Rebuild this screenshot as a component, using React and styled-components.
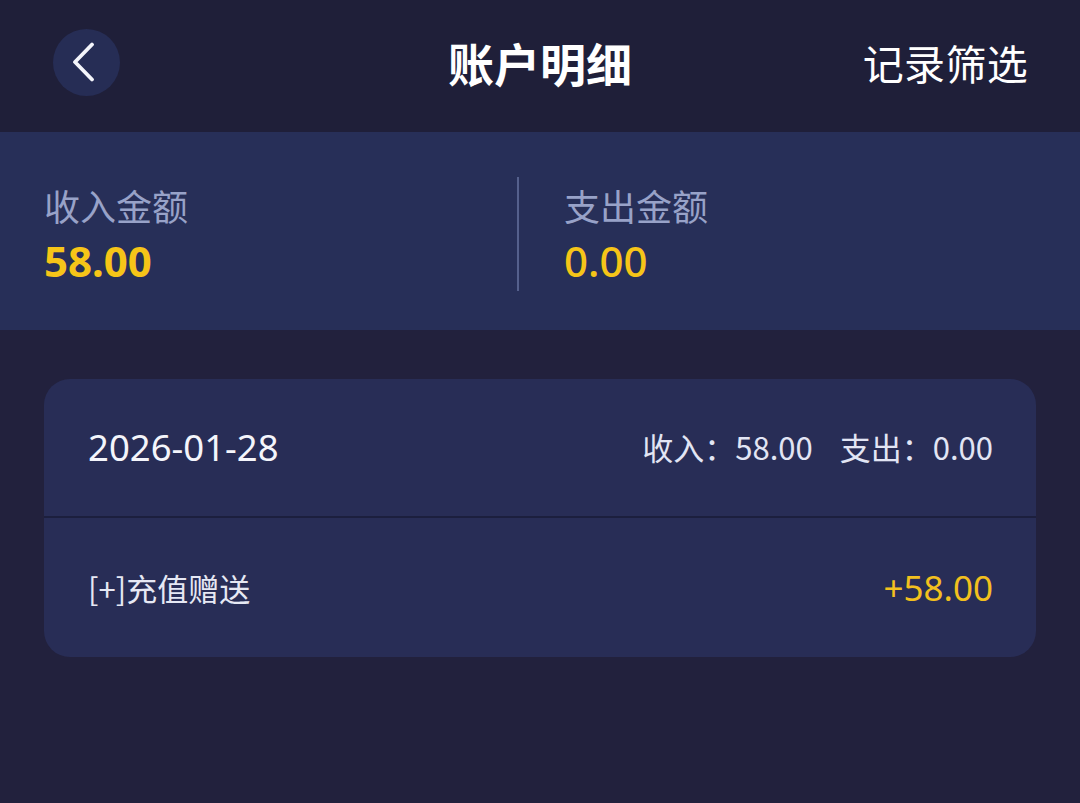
import React from 'react';
import styled, { createGlobalStyle } from 'styled-components';

const GlobalStyle = createGlobalStyle`
  html, body {
    margin: 0;
    padding: 0;
    background: #22213d;
  }
  body {
    font-family: "Noto Sans CJK SC", "Noto Sans", sans-serif;
    -webkit-font-smoothing: antialiased;
  }
`;

const summary = [
  { label: '收入金额', value: '58.00', bold: true },
  { label: '支出金额', value: '0.00' },
];

const records = [
  {
    date: '2026-01-28',
    income: '58.00',
    expense: '0.00',
    items: [{ title: '[+]充值赠送', amount: '+58.00' }],
  },
];

export default function App() {
  return (
    <Page>
      <GlobalStyle />
      <Header>
        <BackButton aria-label="返回">
          <svg width="24" height="40" viewBox="0 0 24 40">
            <path
              d="M20 2.5 L3 20 L20 37.5"
              fill="none"
              stroke="#f4f5fb"
              strokeWidth="3.8"
              strokeLinecap="round"
              strokeLinejoin="round"
            />
          </svg>
        </BackButton>
        <Title>账户明细</Title>
        <FilterLink>记录筛选</FilterLink>
      </Header>

      <Summary>
        {summary.map((s, i) => (
          <SummaryCol key={s.label} divided={i > 0}>
            <SummaryLabel>{s.label}</SummaryLabel>
            <SummaryValue bold={s.bold}>{s.value}</SummaryValue>
          </SummaryCol>
        ))}
      </Summary>

      <List>
        {records.map((r) => (
          <Card key={r.date}>
            <CardHead>
              <DateText>{r.date}</DateText>
              <Totals>
                <span>收入：{r.income}</span>
                <span>支出：{r.expense}</span>
              </Totals>
            </CardHead>
            {r.items.map((it) => (
              <ItemRow key={it.title}>
                <ItemTitle>{it.title}</ItemTitle>
                <ItemAmount>{it.amount}</ItemAmount>
              </ItemRow>
            ))}
          </Card>
        ))}
      </List>
    </Page>
  );
}

const Page = styled.div`
  min-height: 803px;
  background: #22213d;
  color: #fff;
`;

const Header = styled.div`
  height: 132px;
  background: #1f1f39;
  display: flex;
  align-items: center;
  justify-content: space-between;
  padding: 0 52px 8px 53px;
  box-sizing: border-box;
  position: relative;
`;

const BackButton = styled.div`
  width: 67px;
  height: 67px;
  border-radius: 50%;
  background: #262d55;
  display: flex;
  align-items: center;
  justify-content: center;
  padding-right: 6px;
  box-sizing: border-box;
`;

const Title = styled.div`
  position: absolute;
  left: 0;
  right: 0;
  top: 35px;
  text-align: center;
  font-size: 46px;
  font-weight: 700;
  line-height: 54px;
  color: #fff;
  pointer-events: none;
`;

const FilterLink = styled.div`
  font-size: 41px;
  line-height: 52px;
  color: #fff;
  letter-spacing: 0.3px;
`;

const Summary = styled.div`
  height: 198px;
  background: #272f58;
  display: grid;
  grid-template-columns: 517px 1fr;
  align-items: center;
`;

const SummaryCol = styled.div`
  height: 114px;
  padding-left: ${({ divided }) => (divided ? '45px' : '44px')};
  border-left: ${({ divided }) => (divided ? '2px solid #55608c' : 'none')};
  display: flex;
  flex-direction: column;
  justify-content: center;
  box-sizing: border-box;
  margin-top: 6px;
`;

const SummaryLabel = styled.div`
  font-size: 36px;
  line-height: 44px;
  color: #98a2c8;
`;

const SummaryValue = styled.div`
  font-family: "Noto Sans", "Open Sans", sans-serif;
  font-size: 42px;
  line-height: 50px;
  margin-top: 9px;
  font-weight: ${({ bold }) => (bold ? 700 : 500)};
  color: #f6c518;
`;

const List = styled.div`
  padding: 49px 44px 0;
`;

const Card = styled.div`
  background: #282d56;
  border-radius: 26px;
  overflow: hidden;
`;

const CardHead = styled.div`
  height: 139px;
  display: flex;
  align-items: center;
  justify-content: space-between;
  padding: 0 43px 2px 44px;
  border-bottom: 2px solid #1c1f3e;
  box-sizing: border-box;
`;

const DateText = styled.div`
  font-family: "Noto Sans", "Open Sans", sans-serif;
  font-size: 36.5px;
  color: #f4f5fb;
`;

const Totals = styled.div`
  display: flex;
  gap: 27px;
  font-size: 31px;
  color: #e2e5f4;
`;

const ItemRow = styled.div`
  height: 139px;
  display: flex;
  align-items: center;
  justify-content: space-between;
  padding: 0 43px 0 44px;
`;

const ItemTitle = styled.div`
  font-size: 31px;
  color: #e6e8f4;
`;

const ItemAmount = styled.div`
  font-family: "Noto Sans", "Open Sans", sans-serif;
  font-size: 35px;
  color: #f3c01e;
`;
